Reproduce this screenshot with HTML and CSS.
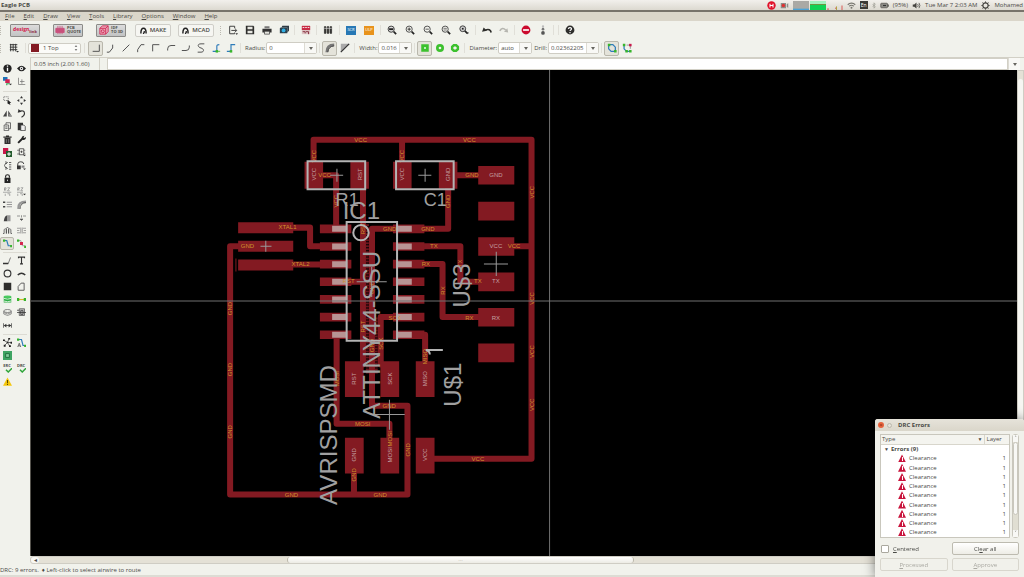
FILE: index.html
```html
<!DOCTYPE html>
<html lang="en">
<head>
  <meta charset="UTF-8">
  <meta name="viewport" content="width=device-width, initial-scale=1.0">
  <title>Eagle PCB</title>
  <link rel="stylesheet" href="styles.css">
</head>
<body>
  <!-- Desktop panel -->
  <header class="panel">
    <h1 class="panel-title">Eagle PCB</h1>
    <div class="tray">
      <svg class="icon" viewBox="0 0 12 12"><circle cx="6" cy="6" r="5.6" fill="#e0122a"/><path d="M4 3.5v5M8 3.5v5M4 6h4" stroke="#fff" stroke-width="1.4"/></svg>
      <svg class="icon" viewBox="0 0 12 12"><path d="M1 2.5h7v7H1zM9 4l2-1v6l-2-1z" fill="#8d8d88"/><circle cx="4.5" cy="6" r="2.3" fill="#d33"/></svg>
      <svg class="graph" viewBox="0 0 50 10" preserveAspectRatio="none"><path d="M0 0h16v10H0z" fill="#aaa9a5"/><path d="M0 8.5h16V10H0z" fill="#4aa3d8"/><path d="M17 0h16v3.5H17z" fill="#a5f0c0"/><path d="M17 3.5h16V10H17z" fill="#12d255"/><path d="M17 3.5h16v.8H17z" fill="#8a7a30"/><path d="M34 9h2M42 8h1.5M49 5v5" stroke="#d9534f"/><path d="M43.5 6v4" stroke="#b0a040"/></svg>
      <svg class="icon" viewBox="0 0 12 12"><path d="M1 5a7 7 0 0 1 10 0M3 7a4.5 4.5 0 0 1 6 0" fill="none" stroke="#77766f" stroke-width="1.5"/><circle cx="6" cy="9" r="1.3" fill="#77766f"/></svg>
      <span class="keyboard">En</span>
      <svg class="icon slim" viewBox="0 0 6 12"><path d="M1 4l4 4-2 2V2l2 2-4 4" fill="none" stroke="#999890"/></svg>
      <svg class="icon" viewBox="0 0 12 12"><rect x="1" y="3" width="9" height="6" rx="1" fill="#8d8c86" stroke="#55544f"/><path d="M11 4.5v3" stroke="#55544f" stroke-width="1.5"/><path d="M4 6h4" stroke="#333" stroke-width="1.5"/></svg>
      <span>(95%)</span>
      <svg class="icon" viewBox="0 0 12 12"><path d="M1 4.5h2L6 2v8L3 7.5H1z" fill="#44433f"/><path d="M7.5 4q1.5 2 0 4M9.3 2.5q2.5 3.5 0 7" fill="none" stroke="#44433f"/></svg>
      <time>Tue Mar 7 2:03 AM</time>
      <svg class="icon" viewBox="0 0 12 12"><circle cx="6" cy="6" r="3.5" fill="none" stroke="#44433f" stroke-width="1.5"/><path d="M6 .5v2M6 9.5v2M.5 6h2M9.5 6h2M2 2l1.5 1.5M8.5 8.5L10 10M10 2L8.5 3.5M3.5 8.5L2 10" stroke="#44433f" stroke-width="1.2"/></svg>
      <span>Mohamed</span>
    </div>
  </header>

  <nav class="menubar">
    <button><u>F</u>ile</button>
    <button><u>E</u>dit</button>
    <button><u>D</u>raw</button>
    <button><u>V</u>iew</button>
    <button><u>T</u>ools</button>
    <button><u>L</u>ibrary</button>
    <button><u>O</u>ptions</button>
    <button><u>W</u>indow</button>
    <button><u>H</u>elp</button>
  </nav>

  <!-- Action toolbar -->
  <div class="toolbar">
    <span class="handle"></span>
    <div class="brands">
      <button class="brand brand-link"><span>design</span><small>link</small></button>
      <button class="brand" aria-label="PCB quote">
        <svg viewBox="0 0 12 12"><path d="M1 4h10v5H1zM3.5 1v10M6 1v10M8.500 1v10" fill="#c9507c" stroke="#c9507c"/></svg>
        <span>PCB<br>QUOTE</span>
      </button>
      <button class="brand" aria-label="IDF to 3D">
        <svg viewBox="0 0 12 12"><path d="M1 4l3-3h7v7l-3 3H1zM1 4h7v7M8 4l3-3" fill="#eaa6b8" stroke="#cf2450"/><circle cx="4.5" cy="7.5" r="1.8" fill="none" stroke="#cf2450"/></svg>
        <span>IDF<br>TO 3D</span>
      </button>
    </div>
    <div class="autodesk">
      <button class="text-button"><svg viewBox="0 0 12 12"><path d="M1.5 11C1.5 6 3 2 6 2s4.5 4 4.5 9M5 11c2 0 2.5-1.5 2.2-4" fill="none" stroke="#222" stroke-width="2.5"/></svg>MAKE</button>
      <button class="text-button"><svg viewBox="0 0 12 12"><path d="M1.5 11C1.5 6 3 2 6 2s4.5 4 4.5 9M5 11c2 0 2.5-1.5 2.2-4" fill="none" stroke="#222" stroke-width="2.5"/></svg>MCAD</button>
    </div>
    <span class="handle"></span>
    <div class="group">
      <button class="tool" aria-label="Open"><svg viewBox="0 0 12 12"><path d="M8 4V1.5H2v9h6V9M4 6.500h6M8.500 4.500l2 2-2 2" fill="none" stroke="#333" stroke-width="1.1"/><path d="M9 10h3l-1.5 2z" fill="#333"/></svg></button>
      <button class="tool" aria-label="Save"><svg viewBox="0 0 12 12"><path d="M1 1h9l1 1v9H1z" fill="#2e2e2c"/><path d="M3 2h6v3H3zM3 7h6v3H3z" fill="#e8e8e2"/></svg></button>
      <button class="tool" aria-label="Print"><svg viewBox="0 0 12 12"><path d="M3 1.5h6V4H3z" fill="#777"/><path d="M.5 4.5h11V9H.5z" fill="#333"/><path d="M3 7.5h6V11H3z" fill="#e5e5df" stroke="#333" stroke-width=".8"/></svg></button>
      <button class="tool" aria-label="CAM processor"><svg viewBox="0 0 12 12"><path d="M4 1h8v6l-2 2V3H3z" fill="#2e3b44"/><path d="M2 3h8v7H1V4z" fill="#2c4250"/><circle cx="5.5" cy="6.5" r="2.3" fill="#31b0e5"/></svg></button>
    </div>
    <span class="sep"></span>
    <div class="group">
      <button class="tool" aria-label="Switch to schematic"><svg viewBox="0 0 12 12"><path d="M1 1h10v10H1z" fill="#ddc2c2"/><path d="M1 1h10v5H1z" fill="#c72b45"/><path d="M2 8h3v2M6 8h3v3" fill="none" stroke="#7c1f30"/><path d="M2 3h2m1 0h2m1 0h2" stroke="#fff"/></svg></button>
    </div>
    <span class="sep"></span>
    <div class="group wide">
      <button class="tool" aria-label="Library"><svg viewBox="0 0 12 12"><path d="M1 2h10v8H1z" fill="#9b9b96"/><path d="M2.5 1.5v9M6 1.5v9M9.5 1.5v9" stroke="#2e2e2c" stroke-width="2"/><path d="M1.500 4h9" stroke="#ddd" stroke-width=".8"/></svg></button>
    </div>
    <span class="sep"></span>
    <div class="group wide">
      <button class="tool tag tag-scr">SCR</button>
      <button class="tool tag tag-ulp">ULP</button>
    </div>
    <span class="sep"></span>
    <div class="group wide">
      <button class="tool" aria-label="Zoom to fit"><svg viewBox="0 0 12 12"><circle cx="5" cy="5" r="3.7" fill="#ddd" stroke="#444" stroke-width="1.2"/><path d="M2.5 5h5" stroke="#222" stroke-width="2.2"/><path d="M8 8l3 3" stroke="#222" stroke-width="2"/></svg></button>
      <button class="tool" aria-label="Zoom in"><svg viewBox="0 0 12 12"><circle cx="5" cy="5" r="3.7" fill="none" stroke="#555" stroke-width="1.2"/><path d="M3 5h4M5 3v4" stroke="#222"/><path d="M8 8l3 3" stroke="#222" stroke-width="2"/></svg></button>
      <button class="tool" aria-label="Zoom out"><svg viewBox="0 0 12 12"><circle cx="5" cy="5" r="3.7" fill="none" stroke="#555" stroke-width="1.2"/><path d="M3 5h4" stroke="#444"/><path d="M8 8l3 3" stroke="#222" stroke-width="2"/></svg></button>
      <button class="tool" aria-label="Redraw"><svg viewBox="0 0 12 12"><circle cx="5" cy="5" r="3.7" fill="none" stroke="#555" stroke-width="1.2"/><path d="M3 4h4M3 6h4" stroke="#666"/><path d="M8 8l3 3" stroke="#222" stroke-width="2"/></svg></button>
      <button class="tool" aria-label="Zoom select"><svg viewBox="0 0 12 12"><circle cx="4.5" cy="4.5" r="3.5" fill="#ccc" stroke="#444" stroke-width="1.2"/><path d="M3.5 3.5h2v2h-2z" fill="#222"/><path d="M7 7l3 3" stroke="#222" stroke-width="2"/><path d="M9 9h3l-1.5 2z" fill="#333"/></svg></button>
    </div>
    <span class="sep"></span>
    <div class="group">
      <button class="tool" aria-label="Undo"><svg viewBox="0 0 12 12"><path d="M11 9Q10 4 4 6" fill="none" stroke="#2e2e2c" stroke-width="2"/><path d="M0 8l2-5 4 4z" fill="#2e2e2c"/></svg></button>
      <button class="tool" aria-label="Redo"><svg viewBox="0 0 12 12"><path d="M1 7Q4 2 8 6" fill="none" stroke="#b5b5af" stroke-width="2"/><path d="M11 9l-1-5-4 4z" fill="#b5b5af"/></svg></button>
    </div>
    <span class="sep"></span>
    <div class="group">
      <button class="tool" aria-label="Stop"><svg viewBox="0 0 12 12"><circle cx="6" cy="6" r="5.3" fill="#cb0a2d"/><path d="M2.5 6h7" stroke="#fff" stroke-width="2"/></svg></button>
      <button class="tool" aria-label="Go"><svg viewBox="0 0 12 12"><circle cx="6" cy="1.8" r="1.4" fill="#bbb"/><circle cx="6" cy="5" r="1.6" fill="#777"/><circle cx="6" cy="9.5" r="2.2" fill="#555"/></svg></button>
    </div>
    <span class="sep"></span>
    <span class="sep"></span>
    <div class="group wide">
      <button class="tool" aria-label="Help"><svg viewBox="0 0 12 12"><circle cx="6" cy="6" r="5.3" fill="#2e2e2c"/><path d="M4 4.6C4.2 2.5 8 2.6 7.8 4.8 7.6 6 6 6 6 7.300M6 8.400v1.400" fill="none" stroke="#fff" stroke-width="1.4"/></svg></button>
    </div>
  </div>

  <!-- Parameter toolbar -->
  <div class="toolbar">
    <span class="handle handle-near"></span>
    <div class="group wide">
      <button class="tool" aria-label="Grid"><svg viewBox="0 0 12 12"><path d="M1 2h9M1 5h9M1 8h9M2 1v9M5 1v9M8 1v9" stroke="#333" stroke-width="1.1"/><path d="M8.5 9.5h3.5l-1.700 2z" fill="#333"/></svg></button>
    </div>
    <span class="sep"></span>
    <label class="layer">
      <span class="swatch"></span>
      <select aria-label="Layer"><option>1 Top</option><option>16 Bottom</option></select>
      <svg viewBox="0 0 6 12"><path d="M1 4l2-2 2 2zM1 8l2 2 2-2z" fill="#555"/></svg>
    </label>
    <span class="sep sep-wide"></span>
    <div class="group bends">
      <button class="tool pressed" aria-label="Bend 0"><svg viewBox="0 0 12 12"><path d="M2 10h8V2" fill="none" stroke="#555" stroke-width="1.2"/></svg></button>
      <button class="tool" aria-label="Bend 1"><svg viewBox="0 0 12 12"><path d="M1 11h3l4-5V2" fill="none" stroke="#555" stroke-width="1.2"/></svg></button>
      <button class="tool" aria-label="Bend 2"><svg viewBox="0 0 12 12"><path d="M2 10l8-8" fill="none" stroke="#555" stroke-width="1.2"/></svg></button>
      <button class="tool" aria-label="Bend 3"><svg viewBox="0 0 12 12"><path d="M2 11V8l4-6h4" fill="none" stroke="#555" stroke-width="1.2"/></svg></button>
      <button class="tool" aria-label="Bend 4"><svg viewBox="0 0 12 12"><path d="M2 10V2h8" fill="none" stroke="#555" stroke-width="1.2"/></svg></button>
      <button class="tool" aria-label="Bend 5"><svg viewBox="0 0 12 12"><path d="M2 9V7q0-4 4-4h5" fill="none" stroke="#555" stroke-width="1.2"/></svg></button>
      <button class="tool" aria-label="Bend 6"><svg viewBox="0 0 12 12"><path d="M1 9h5q4 0 4-4V3" fill="none" stroke="#555" stroke-width="1.2"/></svg></button>
      <button class="tool" aria-label="Bend 7"><svg viewBox="0 0 12 12"><path d="M10 1H6C1 1 2 5 6 6s4 5 0 5H2" fill="none" stroke="#555" stroke-width="1.2"/></svg></button>
      <button class="tool" aria-label="Follow me"><svg viewBox="0 0 12 12"><path d="M2 10h5V4q0-2 3-2" fill="none" stroke="#2f7cba" stroke-width="1.4"/><path d="M5.500 8.500h3v3h-3z" fill="#38b52c"/><path d="M7 10h4" stroke="#38b52c"/></svg></button>
      <button class="tool" aria-label="Follow me partial"><svg viewBox="0 0 12 12"><path d="M1 10h5V2h5" fill="none" stroke="#2f7cba" stroke-width="1.4"/><path d="M4.500 8.500h3v3h-3z" fill="#38b52c"/></svg></button>
    </div>
    <span class="sep"></span>
    <label for="radius">Radius:</label>
    <span class="combo combo-wide"><input id="radius" value="0"><button aria-label="Radius values"></button></span>
    <span class="sep"></span>
    <div class="group bends">
      <button class="tool pressed" aria-label="Round miter"><svg viewBox="0 0 12 12"><path d="M2 11Q2 2 11 2" fill="none" stroke="#777" stroke-width="3"/><path d="M3.5 11Q4 4 11 3.5" fill="none" stroke="#333"/></svg></button>
      <button class="tool" aria-label="Straight miter"><svg viewBox="0 0 12 12"><path d="M1 1h10L1 11z" fill="#aaa"/><path d="M1 11L11 1" stroke="#333" stroke-width="1.5"/></svg></button>
    </div>
    <span class="sep"></span>
    <label for="width">Width:</label>
    <span class="combo"><input id="width" value="0.016"><button aria-label="Width values"></button></span>
    <span class="sep"></span>
    <div class="group bends">
      <button class="tool pressed" aria-label="Square via"><svg viewBox="0 0 12 12"><path d="M1.5 1.5h9v9h-9z" fill="#3cc12e"/><circle cx="6" cy="6" r="1.2" fill="#e8ffe4"/></svg></button>
      <button class="tool" aria-label="Round via"><svg viewBox="0 0 12 12"><circle cx="6" cy="6" r="3.2" fill="none" stroke="#3cc12e" stroke-width="3.2"/></svg></button>
      <button class="tool" aria-label="Octagon via"><svg viewBox="0 0 12 12"><path d="M4.6 2.6h2.8l2 2v2.8l-2 2H4.600l-2-2V4.600z" fill="none" stroke="#3cc12e" stroke-width="3"/></svg></button>
    </div>
    <span class="sep"></span>
    <label for="diameter">Diameter:</label>
    <span class="combo"><input id="diameter" value="auto"><button aria-label="Diameter values"></button></span>
    <label for="drill">Drill:</label>
    <span class="combo combo-wide"><input id="drill" value="0.02362205"><button aria-label="Drill values"></button></span>
    <span class="sep"></span>
    <div class="group bends">
      <button class="tool pressed" aria-label="Loop removal"><svg viewBox="0 0 12 12"><path d="M2 2h5l3 3v5H5L2 7z" fill="none" stroke="#2f7cba" stroke-width="1.5"/><path d="M1 1h3v3H1zM8.500 8.500h3v3h-3z" fill="#38b52c"/></svg></button>
      <button class="tool" aria-label="Keep loops"><svg viewBox="0 0 12 12"><path d="M2.5 2v5l3 3h5" fill="none" stroke="#2f7cba" stroke-width="1.5"/><path d="M1 1h3v3H1zM8.500 8.500h3v3h-3zM4 8.500h3v3H4z" fill="#38b52c"/><path d="M5.500 2.500H10V7" fill="none" stroke="#888"/><path d="M8.500 1h3v3h-3z" fill="#c9184a"/></svg></button>
    </div>
  </div>

  <div class="workspace">
    <aside class="sidebar">
      <div class="tools">
        <button aria-label="Info"><svg viewBox="0 0 12 12"><circle cx="6" cy="6" r="5.5" fill="#222"/><path d="M6 2v1.5M6 5v4.500" stroke="#fff" stroke-width="1.8"/></svg></button>
        <button aria-label="Show"><svg viewBox="0 0 12 12"><path d="M0 6q6-7.5 12 0-6 7.5-12 0z" fill="#222"/><circle cx="6" cy="6" r="2.2" fill="#fff"/><circle cx="6" cy="6" r="1" fill="#222"/></svg></button>
        <button aria-label="Display"><svg viewBox="0 0 12 12"><path d="M0 0h6v5H0z" fill="#1e73b8"/><path d="M3 3h6v5H3z" fill="#cc2352"/><path d="M5 11V9h4" fill="none" stroke="#2fac5a" stroke-width="1.5"/><path d="M8 9h4l-2 2z" fill="#333"/></svg></button>
        <button aria-label="Mark"><svg viewBox="0 0 12 12"><path d="M2 1v9h9M6.5 3v6M4 6h6" fill="none" stroke="#777"/></svg></button>
      </div>
      <hr>
      <div class="tools">
        <button aria-label="Group"><svg viewBox="0 0 12 12"><path d="M1 1h6v5H1z" fill="none" stroke="#666" stroke-dasharray="1.5 1"/><path d="M6 5l5 4-2 .3L10 12 8 11 6 10z" fill="#222"/></svg></button>
        <button aria-label="Move"><svg viewBox="0 0 12 12"><path d="M6 0l2 3H4zM6 12l2-3H4zM0 6l3-2v4zM12 6L9 4v4z" fill="#333"/></svg></button>
        <button aria-label="Mirror"><svg viewBox="0 0 12 12"><path d="M5 2v8H0zM7 2l5 8H7z" fill="#444"/><path d="M9 6l1.5 3H8.500z" fill="#ddd"/></svg></button>
        <button aria-label="Rotate"><svg viewBox="0 0 12 12"><path d="M3 3q7-2 7 3 0 3-4 5" fill="none" stroke="#333" stroke-width="1.5"/><path d="M1 5l1-5 4 3.500z" fill="#333"/></svg></button>
        <button aria-label="Copy"><svg viewBox="0 0 12 12"><path d="M1.5 4h6v7.500h-6zM4 4V1h6v8H7.500M3 6.500h3M3 8.500h3" fill="none" stroke="#555" stroke-width="1.1"/></svg></button>
        <button aria-label="Paste"><svg viewBox="0 0 12 12"><path d="M1 1h7v10H1z" fill="#333"/><path d="M5 4h4l2 2v5.500H5z" fill="#eee" stroke="#333"/></svg></button>
        <button aria-label="Delete"><svg viewBox="0 0 12 12"><path d="M.5 2h11v1.500H.5zM4 .5h4V2H4zM2 4h8v8H2z" fill="#2e2e2c"/><path d="M4.500 5.500v5M7.500 5.500v5" stroke="#888"/></svg></button>
        <button aria-label="Change"><svg viewBox="0 0 12 12"><path d="M1.5 10.5L7 5" stroke="#222" stroke-width="2.5"/><path d="M6 5q0-4 4-4L8.500 3l1 1L12 2.500Q12 7 7.500 6.500z" fill="#222"/></svg></button>
        <button aria-label="Add"><svg viewBox="0 0 12 12"><path d="M0 0h7v8H0z" fill="#c9184a"/><path d="M4 4h8v8H4z" fill="#245c2e"/><path d="M8 5.500v5M5.500 8h5" stroke="#fff" stroke-width="1.4"/></svg></button>
        <button aria-label="Replace"><svg viewBox="0 0 12 12"><path d="M0 3h4M0 8h4M9 3h2M9 7h2" stroke="#666"/><path d="M3 1h6v8H3z" fill="none" stroke="#333"/><path d="M4.500 5h3M6 3.500v3" stroke="#333"/><path d="M8 9h4l-2 2z" fill="#333"/></svg></button>
        <button aria-label="Pin swap"><svg viewBox="0 0 12 12"><path d="M4 2Q0 6 4 10M3 1l3 1-2 2M3 11l3-1-2-2M8 2h3M8 5h3M8 8h3M8 11h3" fill="none" stroke="#444" stroke-width="1.1"/></svg></button>
        <button aria-label="Gate swap"><svg viewBox="0 0 12 12"><path d="M1 7V4q0-3 4-3t4 3" fill="none" stroke="#333" stroke-width="1.2"/><path d="M0 6h5v5H0z" fill="#333"/><path d="M6 6h4v3H6z" fill="#888"/><path d="M8 10h4l-2 2z" fill="#333"/></svg></button>
        <button class="single" aria-label="Lock"><svg viewBox="0 0 12 12"><path d="M2 5h8v7H2z" fill="#222"/><path d="M3.5 5V3q0-2 2.500-2t2.500 2v2" fill="none" stroke="#222" stroke-width="1.5"/><path d="M6 7.500v2" stroke="#fff"/></svg></button>
        <button aria-label="Name"><svg viewBox="0 0 12 12"><path d="M2 1v4M2 1h2v2H2l2 2M6 1h3L6 5h3M0 7h11M3 9v3M6 9h3v3" fill="none" stroke="#888" stroke-width=".9"/></svg></button>
        <button aria-label="Value"><svg viewBox="0 0 12 12"><path d="M1 1v4M1 1h2v2H1l2 2M5 1h3L5 5h3M0 7h8M1 9v3M4 9h3v3" fill="none" stroke="#888" stroke-width=".9"/><path d="M8 9h4l-2 2z" fill="#333"/></svg></button>
        <button aria-label="Smash"><svg viewBox="0 0 12 12"><path d="M5 3h7M5 6h7M5 9h7" stroke="#999" stroke-width="1.5"/><path d="M0 2h3v2H0zM0 8h3v2H0z" fill="#444"/></svg></button>
        <button aria-label="Miter"><svg viewBox="0 0 12 12"><path d="M2 12Q1 2 12 2" fill="none" stroke="#999" stroke-width="3"/><path d="M4 12Q4 4 12 3.500" fill="none" stroke="#333"/></svg></button>
        <button aria-label="Split"><svg viewBox="0 0 12 12"><path d="M1 11Q2 3 6 3v8z" fill="#444"/><path d="M6 3h4v8H6z" fill="#999"/></svg></button>
        <button aria-label="Optimize"><svg viewBox="0 0 12 12"><path d="M0 4h4M8 4h4" stroke="#777"/><path d="M6 3v3M4 8h4L6 10z" stroke="#555" fill="#555" stroke-width=".8"/></svg></button>
        <button aria-label="Meander"><svg viewBox="0 0 12 12"><path d="M0 10h1.500V5q1.500-3 3 0v5V3q1.500-3 3 0v7V5q1.500-3 3 0v5H12" fill="none" stroke="#444"/></svg></button>
        <button aria-label="Fanout"><svg viewBox="0 0 12 12"><path d="M0 3h4M0 6h3M0 9h4M8 3h4M9 6h3M8 9h4M5 2v8M7 2v8" stroke="#888"/></svg></button>
        <button class="pressed" aria-label="Route"><svg viewBox="0 0 12 12"><path d="M1 2h4l2 7h4" fill="none" stroke="#2f7cba" stroke-width="1.6"/><path d="M0 .5h3v3H0zM9.500 8h2.500v3H9.500z" fill="#38b52c"/></svg></button>
        <button aria-label="Ripup"><svg viewBox="0 0 12 12"><path d="M1 2h4l2 7h4" fill="none" stroke="#999" stroke-width="1.2"/><path d="M0 .5h3v3H0zM9.500 9H12v3H9.500z" fill="#38b52c"/><path d="M4 4h4v4H4z" fill="#d6264f"/></svg></button>
      </div>
      <hr class="tight">
      <div class="tools">
        <button aria-label="Line"><svg viewBox="0 0 12 12"><path d="M0 10h7l3-8" fill="none" stroke="#555"/><path d="M0 10h7" stroke="#333" stroke-width="2"/></svg></button>
        <button aria-label="Text"><svg viewBox="0 0 12 12"><path d="M2 3V1.500h8V3M6 1.500v9M4 10.500h4" fill="none" stroke="#333" stroke-width="1.5"/></svg></button>
        <button aria-label="Circle"><svg viewBox="0 0 12 12"><circle cx="6" cy="6" r="4.5" fill="none" stroke="#333" stroke-width="1.5"/></svg></button>
        <button aria-label="Arc"><svg viewBox="0 0 12 12"><path d="M1 8q5-5 10 0" fill="none" stroke="#333" stroke-width="2"/></svg></button>
        <button aria-label="Rectangle"><svg viewBox="0 0 12 12"><path d="M1 1h10v10H1z" fill="#2e2e2c"/></svg></button>
        <button aria-label="Polygon"><svg viewBox="0 0 12 12"><path d="M1.5 11V6l4-4.500h4V11z" fill="none" stroke="#555" stroke-width="1.2"/></svg></button>
        <button aria-label="Via"><svg viewBox="0 0 12 12"><path d="M1 2h10v8H1z" fill="#2fae46"/><path d="M1 4.500q5 2 10 0M1 8q5 2 10 0" fill="none" stroke="#d5f2d8" stroke-width="1.3"/><ellipse cx="6" cy="2.3" rx="5" ry="1.6" fill="#4acb60"/></svg></button>
        <button aria-label="Signal"><svg viewBox="0 0 12 12"><path d="M1 6h10" stroke="#d6b52b" stroke-width="1.5"/><path d="M0 4h3v4H0zM9 4h3v4H9z" fill="#38b52c"/></svg></button>
        <button aria-label="Hole"><svg viewBox="0 0 12 12"><ellipse cx="6" cy="4" rx="5" ry="2" fill="none" stroke="#666"/><path d="M1 4v4q5 4 10 0V4M1 6q5 4 10 0" fill="none" stroke="#777"/></svg></button>
        <button aria-label="Attribute"><svg viewBox="0 0 12 12"><path d="M3 1h7v9H3z" fill="#bbb" stroke="#555"/><path d="M0 3h3M0 6h12M5 3.500h3v5H5z" fill="none" stroke="#333"/></svg></button>
        <button class="single" aria-label="Dimension"><svg viewBox="0 0 12 12"><path d="M.5 3v6M11.500 3v6M2 6h8" stroke="#333"/><path d="M1 6l3.500-2.500v5zM11 6L7.500 3.500v5z" fill="#333"/></svg></button>
      </div>
      <hr class="tight">
      <div class="tools">
        <button aria-label="Ratsnest"><svg viewBox="0 0 12 12"><path d="M6 6L1 3M6 6l2-5M6 6l5 0M6 6l3 5M6 6l-4 4" stroke="#444"/><path d="M0 2h2.500v2H0zM7 0h2.500v2H7zM10 5h2v2.500h-2zM8 9.500h2.500V12H8zM1 9h2.500v2.500H1zM5 5h2v2H5z" fill="#222"/></svg></button>
        <button aria-label="Autorouter"><svg viewBox="0 0 12 12"><path d="M2 2h4l2 8h4" fill="none" stroke="#2f7cba" stroke-width="1.6"/><path d="M0 .5h3v3H0zM9.500 9H12v3H9.500z" fill="#38b52c"/><path d="M1 12l2-5 2 5M2 10.500h2" fill="none" stroke="#444"/></svg></button>
        <button class="single" aria-label="Package"><svg viewBox="0 0 12 12"><path d="M0 0h12v12H0z" fill="#3fa463"/><path d="M3.5 3.5h5v5h-5z" fill="#83c99b" stroke="#1d6b39" stroke-width="1.2"/></svg></button>
        <button class="check" aria-label="ERC"><small>ERC</small><svg viewBox="0 0 12 6"><path d="M4 2l3 3 5-5" fill="none" stroke="#2fa53a" stroke-width="2"/></svg></button>
        <button class="check" aria-label="DRC"><small>DRC</small><svg viewBox="0 0 12 6"><path d="M4 2l3 3 5-5" fill="none" stroke="#2fa53a" stroke-width="2"/></svg></button>
        <button class="single" aria-label="Errors"><svg viewBox="0 0 12 12"><path d="M6 .5L12 11.500H0z" fill="#f5c70c"/><path d="M6 4v4M6 9v1.500" stroke="#5c4a00" stroke-width="1.4"/></svg></button>
      </div>
    </aside>

    <main class="editor">
      <div class="command">
        <output class="coords">0.05 inch (2.00 1.60)</output>
        <input class="command-line" aria-label="Command">
        <button class="drop" aria-label="Command history"></button>
      </div>

      <div class="viewport">
        <!-- Board layout -->
        <svg class="board" viewBox="32 71 986 485" preserveAspectRatio="xMinYMin slice">
          <g class="trace">
            <path d="M314 166V140.500H531.500V459H430M402.300 141V166M514 247H531"/>
            <path d="M320 176H336.500V229"/>
            <path d="M363.300 188V365M350 282.300H363"/>
            <path d="M290 228.300H310.500V247H325M290 265H325"/>
            <path d="M245 247H230.700V494.700H407.700V406H372.300V229.500H400"/>
            <path d="M354.300 470V494"/>
            <path d="M420 229.500H448.300V188M455 176H480"/>
            <path d="M420 247H460.500V282.300H480"/>
            <path d="M420 264.500H442.700V317.500H480"/>
            <path d="M400 317.500H381V365M410 335.200H425.300V365"/>
            <path d="M337 335V424H389.700V440"/>
          </g>
          <path class="overlap" d="M367.700 225V375M376.500 318V375"/>

          <g class="pad">
            <path d="M305 162.500h18.500v27H305zM350.700 162.500h18.500v27h-18.500z"/>
            <path d="M393.300 162.500h18.500v27h-18.500zM439 162.500h18.500v27H439z"/>
            <path d="M238.700 223h55v11h-55zM238.700 241.500h55v11h-55zM238.700 260.200h55v11h-55zM236 259h1v13h-1z"/>
            <path d="M478.300 166.700h36v18.600h-36zM478.300 202.500h36v18.600h-36zM478.300 237.800h36v18.600h-36zM478.300 273.200h36v18.600h-36zM478.300 308.400h36v18.600h-36zM478.300 344h36v18.600h-36z"/>
            <path d="M345.300 361.700H364v35.600h-18.700zM380.700 361.700h18.700v35.600h-18.700zM416 361.700h18.700v35.600H416z"/>
            <path d="M345.300 438H364v35.600h-18.700zM380.700 438h18.700v35.600h-18.700zM416 438h18.700v35.600H416z"/>
            <path d="M320.300 225.200h31.400v8.600h-31.400zM320.300 242.800h31.400v8.600h-31.400zM320.300 260.400h31.400v8.600h-31.400zM320.300 278h31.400v8.600h-31.400zM320.300 295.600h31.400v8.600h-31.400zM320.300 313.300h31.400v8.600h-31.400zM320.300 330.900h31.400v8.600h-31.400z"/>
            <path d="M393.200 225.200h31.400v8.600h-31.400zM393.200 242.800h31.400v8.600h-31.400zM393.200 260.400h31.400v8.600h-31.400zM393.200 278h31.400v8.600h-31.400zM393.200 295.600h31.400v8.600h-31.400zM393.200 313.300h31.400v8.600h-31.400zM393.200 330.900h31.400v8.600h-31.400z"/>
          </g>
          <path class="lead" d="M340 226.500v115.500M404.500 226.500v115.500"/>

          <g class="net">
            <text x="361" y="143">VCC</text><text x="469.500" y="143">VCC</text>
            <text x="325" y="178">VCC</text><text x="514" y="249">VCC</text><text x="478" y="461">VCC</text>
            <text x="288" y="230">XTAL1</text><text x="301" y="267">XTAL2</text><text x="248" y="249">GND</text>
            <text x="292" y="497">GND</text><text x="380.500" y="497">GND</text><text x="389.500" y="408">GND</text>
            <text x="472" y="178">GND</text><text x="428" y="232">GND</text><text x="390" y="232">GND</text>
            <text x="434" y="249">TX</text><text x="478" y="284">TX</text><text x="426" y="267">RX</text>
            <text x="469.500" y="320">RX</text><text x="395" y="320">SCK</text><text x="349" y="284">RST</text>
            <text x="363" y="426">MOSI</text>
            <text transform="translate(316 157) rotate(-90)">VCC</text>
            <text transform="translate(404 157) rotate(-90)">VCC</text>
            <text transform="translate(338 202) rotate(-90)">VCC</text>
            <text transform="translate(534 193) rotate(-90)">VCC</text>
            <text transform="translate(534 299) rotate(-90)">VCC</text>
            <text transform="translate(534 352) rotate(-90)">VCC</text>
            <text transform="translate(534 405) rotate(-90)">VCC</text>
            <text transform="translate(233 309) rotate(-90)">GND</text>
            <text transform="translate(233 370) rotate(-90)">GND</text>
            <text transform="translate(233 432) rotate(-90)">GND</text>
            <text transform="translate(410 450) rotate(-90)">GND</text>
            <text transform="translate(356 475) rotate(-90)">GND</text>
            <text transform="translate(450 202) rotate(-90)">GND</text>
            <text transform="translate(374 346) rotate(-90)">GND</text>
            <text transform="translate(374 288) rotate(-90)">GND</text>
            <text transform="translate(462 264) rotate(-90)">TX</text>
            <text transform="translate(445 291) rotate(-90)">RX</text>
            <text transform="translate(383 344) rotate(-90)">SCK</text>
            <text transform="translate(365 229) rotate(-90)">RST</text>
            <text transform="translate(365 327) rotate(-90)">RST</text>
            <text transform="translate(339 379) rotate(-90)">MOSI</text>
            <text transform="translate(392 439) rotate(-90)">MOSI</text>
            <text transform="translate(427 357) rotate(-90)">MISO</text>
          </g>
          <g class="pin">
            <text x="496" y="178">GND</text><text x="496" y="249">VCC</text>
            <text x="496" y="284">TX</text><text x="496" y="320">RX</text>
            <text transform="translate(316 175) rotate(-90)">VCC</text>
            <text transform="translate(362 175) rotate(-90)">RST</text>
            <text transform="translate(404 175) rotate(-90)">VCC</text>
            <text transform="translate(450 175) rotate(-90)">GND</text>
            <text transform="translate(356 379) rotate(-90)">RST</text>
            <text transform="translate(392 379) rotate(-90)">SCK</text>
            <text transform="translate(427 379) rotate(-90)">MISO</text>
            <text transform="translate(356 455) rotate(-90)">GND</text>
            <text transform="translate(392 455) rotate(-90)">MOSI</text>
            <text transform="translate(427 455) rotate(-90)">VCC</text>
          </g>

          <g class="outline">
            <path d="M308 162h57.500v28H308zM396.300 162h57.500v28h-57.500zM347 222.700h50.300v118.600H347z"/>
            <circle cx="361.3" cy="233.3" r="7.7"/>
            <path d="M443 350.500H426q4 1 4 4.500"/>
          </g>
          <path class="origin" d="M330.500 176h13M337.300 169.500v13M418.500 176h13M425.300 169.500v13M484 264.500h24M496.300 252.500v24M357 282.300h30M372 267.500v30M261 247h11M266.300 241.500v11M375 414.700h30M389.700 400v30"/>
          <g class="name">
            <text class="name-small" x="336" y="207">R1</text>
            <text class="name-small" x="424" y="207">C1</text>
            <text x="343" y="220">IC1</text>
            <text transform="translate(380 419) rotate(-90)">ATTINY44-SSU</text>
            <text transform="translate(337 505) rotate(-90)">AVRISPSMD</text>
            <text transform="translate(470 308) rotate(-90)">U$3</text>
            <text transform="translate(461 407) rotate(-90)">U$1</text>
          </g>
          <path class="cursor" d="M31 301.500H1018M549.500 70V557"/>
        </svg>
        <div class="scroll-y"><span class="thumb"></span></div>
      </div>
      <div class="scroll-x"><span class="arrow">◂</span><span class="thumb">···</span></div>
    </main>
  </div>

  <footer class="status">DRC: 9 errors. &nbsp;♦ Left-click to select airwire to route</footer>

  <!-- DRC window -->
  <section class="dialog">
    <div class="dialog-title"><button class="close" aria-label="Close">×</button><button class="minimize" aria-label="Minimize"></button><h2>DRC Errors</h2></div>
    <div class="dialog-list">
      <div class="list">
        <table>
          <thead><tr><th>Type<span class="sort">▼</span></th><th class="layer-head">Layer</th></tr></thead>
          <tbody>
            <tr class="branch"><td colspan="2"><span class="expander">▼</span>Errors (9)</td></tr>
            <tr><td><i class="alert"></i>Clearance</td><td>1</td></tr>
            <tr><td><i class="alert"></i>Clearance</td><td>1</td></tr>
            <tr><td><i class="alert"></i>Clearance</td><td>1</td></tr>
            <tr><td><i class="alert"></i>Clearance</td><td>1</td></tr>
            <tr><td><i class="alert"></i>Clearance</td><td>1</td></tr>
            <tr><td><i class="alert"></i>Clearance</td><td>1</td></tr>
            <tr><td><i class="alert"></i>Clearance</td><td>1</td></tr>
            <tr><td><i class="alert"></i>Clearance</td><td>1</td></tr>
            <tr><td><i class="alert"></i>Clearance</td><td>1</td></tr>
          </tbody>
        </table>
      </div>
      <div class="list-scroll"><span>˄</span><span class="thumb"></span><span>˅</span></div>
    </div>
    <div class="dialog-actions">
      <label class="centered"><input type="checkbox"><span><u>C</u>entered</span></label>
      <button>Cl<u>e</u>ar all</button>
      <button disabled><u>P</u>rocessed</button>
      <button disabled><u>A</u>pprove</button>
    </div>
  </section>
</body>
</html>
```

FILE: styles.css
```css
* {
  box-sizing: border-box;
}

body {
  margin: 0;
  height: 100vh;
  display: flex;
  flex-direction: column;
  overflow: hidden;
  background: #f1f2ec;
  color: #4a4a46;
  font: 6px/8px "Open Sans", "Noto Sans", sans-serif;
}

button,
input,
select {
  font: inherit;
  color: inherit;
  margin: 0;
  padding: 0;
  border: 0;
  background: none;
}

svg {
  display: block;
}

/* Desktop panel */
.panel {
  display: flex;
  align-items: center;
  justify-content: space-between;
  height: 12px;
  padding: 0 1px;
  background: linear-gradient(#f2f0ec, #dcd9d0);
  border-bottom: 2px solid #77736b;
}

.panel-title {
  margin: 0;
  font-size: 6px;
  font-weight: bold;
}

.tray {
  display: flex;
  align-items: center;
  gap: 4px;
}

.tray .icon {
  width: 9px;
  height: 9px;
}

.tray .slim {
  width: 4px;
}

.graph {
  width: 50px;
  height: 9px;
}

.keyboard {
  width: 8px;
  background: #3b3a36;
  color: #fff;
  text-align: center;
  font-size: 5px;
}

/* Menu */
.menubar {
  display: flex;
  align-items: flex-start;
  gap: 9px;
  height: 9px;
  padding-left: 5px;
  background: #dad6ca;
}

/* Toolbars */
.toolbar {
  display: flex;
  align-items: center;
  height: 18px;
  white-space: nowrap;
}

.handle {
  width: 4px;
  height: 9px;
  margin-right: 6px;
  border-left: 1px dotted #bbb9b0;
}

.handle-near {
  margin-right: 1px;
}

.autodesk + .handle {
  margin: 0 0 0 6px;
}

.brands {
  display: flex;
  gap: 13px;
  margin-right: 9px;
}

.brand {
  display: flex;
  align-items: center;
  justify-content: center;
  gap: 2px;
  width: 30px;
  height: 13px;
  border: 1px solid #8b8b88;
  border-radius: 1px;
  background: linear-gradient(#dcdcdc, #c2c3c3);
  font: bold 4px/4px "Open Sans", sans-serif;
  text-align: left;
}

.brand svg {
  width: 10px;
  height: 10px;
}

.brand-link {
  gap: 0;
  color: #d11c4c;
  font-size: 5px;
}

.brand-link span {
  padding-bottom: 3px;
}

.brand-link small {
  padding-top: 4px;
  font-size: 4px;
  color: #8a1c38;
}

.autodesk {
  display: flex;
  gap: 7px;
}

.text-button {
  display: flex;
  align-items: center;
  justify-content: center;
  gap: 3px;
  width: 36px;
  height: 13px;
  border: 1px solid #cfcec8;
  border-radius: 2px;
  background: #f6f6f2;
  font-weight: 600;
}

.text-button svg {
  width: 7px;
  height: 7px;
}

.group {
  display: flex;
}

.tool {
  display: flex;
  align-items: center;
  justify-content: center;
  width: 17px;
  height: 15px;
}

.wide .tool {
  width: 18px;
}

.bends .tool {
  width: 15px;
}

.tool svg {
  width: 10px;
  height: 10px;
}

.pressed {
  border: 1px solid #b9b7ac;
  border-radius: 2px;
  background: #e4e3da;
}

.wide .tag {
  width: 10px;
  height: 9px;
  margin: 0 4px;
  color: #fff;
  font-size: 4px;
}

.tag-scr {
  background: #2778b5;
}

.tag-ulp {
  background: #e8931c;
}

.sep {
  width: 1px;
  height: 10px;
  margin: 0 2px;
  background: #e0dfd8;
}

.sep-wide {
  margin: 0 3px;
}

.layer {
  display: flex;
  align-items: center;
  width: 53px;
  height: 11px;
  padding: 0 2px;
  border: 1px solid #cfcdc4;
  border-radius: 2px;
  background: #fbfbf8;
}

.swatch {
  width: 8px;
  height: 8px;
  background: #831a22;
}

.layer select {
  flex: 1;
  min-width: 0;
  padding-left: 4px;
  appearance: none;
}

.layer svg {
  width: 4px;
  height: 8px;
}

.toolbar > label[for] {
  margin: 0 1px 0 2px;
}

.combo {
  display: flex;
  width: 34px;
  height: 12px;
  border: 1px solid #cfcdc4;
  border-radius: 2px;
  background: #fff;
}

.combo-wide {
  width: 51px;
}

.combo input {
  flex: 1;
  min-width: 0;
  padding-left: 2px;
}

.combo button,
.drop {
  display: flex;
  align-items: center;
  justify-content: center;
  width: 12px;
  border-left: 1px solid #dddbd3;
  background: #f8f8f5;
}

.combo button::after,
.drop::after {
  content: "";
  border: 2px solid transparent;
  border-top: 3px solid #66655f;
  border-bottom: 0;
}

/* Workspace */
.workspace {
  display: flex;
  flex: 1;
  min-height: 0;
}

.sidebar {
  width: 30px;
  padding-top: 5px;
}

.tools {
  display: grid;
  grid-template-columns: 14px 14px;
  grid-auto-rows: 13px;
}

.tools button {
  display: flex;
  flex-direction: column;
  align-items: center;
  justify-content: center;
  min-width: 0;
  min-height: 0;
}

.tools .single {
  grid-column: 1 / -1;
  width: 14px;
}

.tools svg {
  width: 9px;
  height: 9px;
}

.tools .check small {
  font: bold 4px/4px "Open Sans", sans-serif;
}

.tools .check svg {
  height: 5px;
}

.sidebar hr {
  height: 1px;
  margin: 3px 3px 2px;
  border: 0;
  background: #dcdbd3;
}

.sidebar .tight {
  margin: 2px 3px 1px;
}

.editor {
  display: flex;
  flex: 1;
  flex-direction: column;
  min-width: 0;
}

.command {
  display: flex;
  height: 13px;
  padding-right: 4px;
  border-top: 1px solid #d2d0c6;
}

.coords {
  width: 70px;
  padding: 2px 3px;
  border: 1px solid #d2d0c6;
  border-width: 0 1px;
}

.command-line {
  flex: 1;
  margin-left: 7px;
  border: 1px solid #d2d0c6;
  background: #fff;
}

.viewport {
  display: flex;
  flex: 1;
  min-height: 0;
}

.board {
  flex: 1;
  min-width: 0;
  height: 100%;
  border-left: 1px solid #55534d;
  background: #000;
}

.scroll-y {
  width: 7px;
  padding-top: 8px;
  border: 1px solid #cfcdc4;
  background: #e4e1d6;
}

.scroll-y .thumb {
  display: block;
  height: 85%;
  border-radius: 3px;
  background: #f6f6f2;
}

.scroll-x {
  display: flex;
  height: 8px;
  border: 1px solid #cfcdc4;
  border-radius: 3px;
  background: #e4e1d6;
  line-height: 6px;
}

.scroll-x .arrow {
  width: 8px;
  border-radius: 3px;
  background: #f8f8f5;
  text-align: center;
}

.scroll-x .thumb {
  width: 35%;
  margin-left: 25%;
  border: 1px solid #bbb8ac;
  border-width: 0 1px;
  border-radius: 3px;
  background: linear-gradient(#fff, #ecebe4);
  color: #aaa89e;
  text-align: center;
}

.status {
  height: 13px;
  padding-top: 2px;
  border-bottom: 2px solid #dddcd4;
}

/* Board layers */
.board text {
  font-family: "Liberation Sans", Arial, sans-serif;
}

.trace {
  fill: none;
  stroke: #831a22;
  stroke-width: 6;
  stroke-linecap: round;
  stroke-linejoin: round;
}

.overlap {
  fill: none;
  stroke: #6b151c;
  stroke-width: 3;
  stroke-dasharray: 2 1;
}

.pad {
  fill: #831a22;
}

.lead {
  fill: none;
  stroke: #b89494;
  stroke-width: 15;
  stroke-dasharray: 6 11.62;
}

.net,
.pin {
  font-size: 6px;
  text-anchor: middle;
  fill: #cf932c;
}

.pin {
  fill: #c3a0a2;
}

.outline {
  fill: none;
  stroke: #b4b4b4;
  stroke-width: 2;
}

.origin {
  fill: none;
  stroke: #999;
}

.name {
  font-size: 24px;
  fill: #a0a0a0;
}

.name-small {
  font-size: 18px;
}

.cursor {
  fill: none;
  stroke: #707070;
}

/* DRC window */
.dialog {
  position: fixed;
  right: 0;
  bottom: 0;
  width: 149px;
  padding: 0 5px 6px;
  border-radius: 3px 3px 0 0;
  background: #f1f1eb;
  box-shadow: 0 0 12px rgba(0, 0, 0, 0.5);
}

.dialog-title {
  display: flex;
  align-items: center;
  gap: 3px;
  height: 12px;
  margin: 0 -5px 3px;
  padding-left: 3px;
  border-radius: 3px 3px 0 0;
  background: linear-gradient(#e6e3da, #dad6ca);
}

.dialog-title h2 {
  margin: 0 0 0 3px;
  font-size: 6px;
}

.close,
.minimize {
  width: 6px;
  height: 6px;
  border-radius: 50%;
  background: #e8623c;
  color: #7c2810;
  line-height: 5px;
}

.minimize {
  width: 5px;
  height: 5px;
  border: 1px solid #bbb8ac;
  background: #e6e3da;
}

.dialog-list {
  display: flex;
  gap: 2px;
  height: 104px;
}

.list {
  flex: 1;
  overflow: hidden;
  border: 1px solid #c9c7bd;
  background: #fff;
}

.list table {
  width: 100%;
  height: 102px;
  border-collapse: collapse;
}

.list th,
.list td {
  padding: 0 1px;
  line-height: 8px;
  text-align: left;
  font-weight: normal;
}

.list th {
  height: 9px;
  background: #f4f4ef;
  border-bottom: 1px solid #d8d6cc;
}

.list .layer-head {
  width: 25px;
  padding-left: 2px;
  border-left: 1px solid #d8d6cc;
}

.sort {
  float: right;
  font-size: 5px;
}

.list td:first-child {
  padding-left: 17px;
}

.list td:last-child {
  padding-right: 3px;
  text-align: right;
}

.list .branch td {
  padding-left: 3px;
  text-align: left;
  font-weight: bold;
}

.expander {
  margin-right: 2px;
  font-size: 5px;
}

.alert {
  display: inline-block;
  width: 8px;
  height: 8px;
  margin-right: 3px;
  background: linear-gradient(#fff, #fff) 50% 70% / 1px 4px no-repeat, #c9143c;
  clip-path: polygon(50% 0, 100% 100%, 0 100%);
  vertical-align: top;
}

.list-scroll {
  display: flex;
  flex-direction: column;
  width: 7px;
  border: 1px solid #c9c7bd;
  border-radius: 3px;
  background: #e0ded2;
  line-height: 7px;
  text-align: center;
}

.list-scroll span {
  height: 7px;
  background: #f8f8f5;
}

.list-scroll .thumb {
  height: 73px;
  margin-bottom: auto;
  border: 1px solid #c9c7bd;
  border-radius: 3px;
}

.dialog-actions {
  display: grid;
  grid-template-columns: 1fr 1fr;
  gap: 3px 4px;
  padding-top: 4px;
}

.dialog-actions button {
  height: 13px;
  border: 1px solid #bdbbb0;
  border-radius: 2px;
  background: linear-gradient(#fff, #eeede6);
}

.dialog-actions button:disabled {
  border-color: #d8d6cd;
  background: #f1f1eb;
  color: #aaa9a2;
}

.centered {
  display: flex;
  align-items: center;
  gap: 4px;
}

.centered input {
  appearance: none;
  width: 8px;
  height: 8px;
  margin-left: 1px;
  border: 1px solid #aaa89e;
  border-radius: 1px;
  background: #fff;
}
```
